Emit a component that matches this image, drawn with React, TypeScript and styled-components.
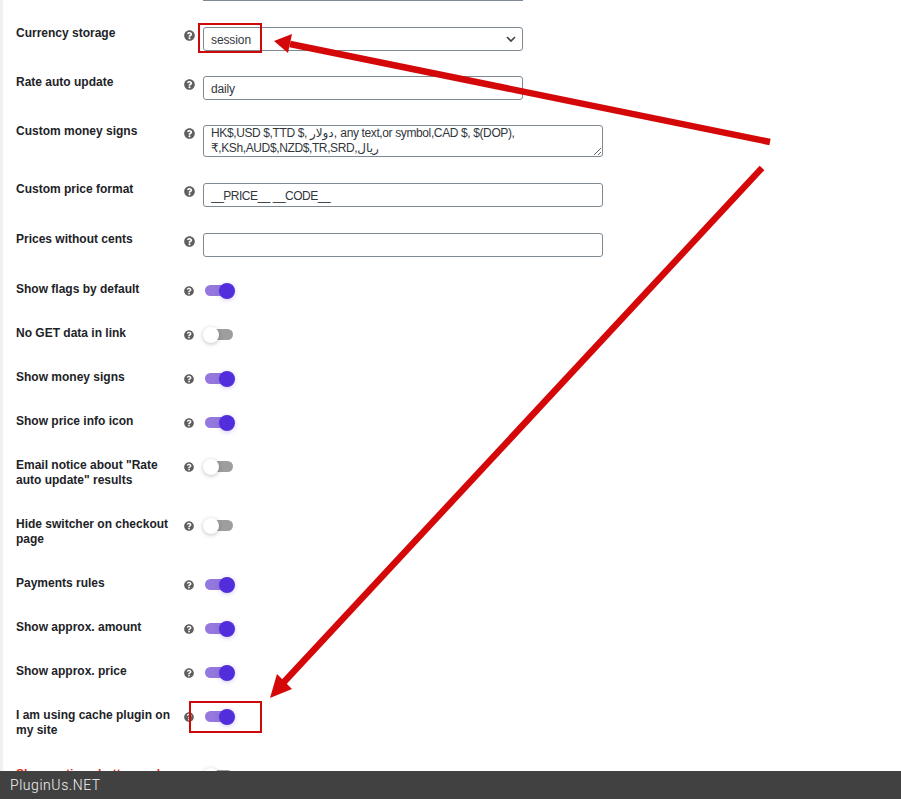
import React from "react";
import styled, { createGlobalStyle } from "styled-components";
import { FaQuestionCircle } from "react-icons/fa";

const Global = createGlobalStyle`
  html, body { margin: 0; padding: 0; height: 100%; overflow: hidden; background: #fff; }
  body { font-family: "Liberation Sans", Arial, sans-serif; }
  * { box-sizing: border-box; }
`;

const Page = styled.main`
  position: relative;
  height: 771px;
  overflow: hidden;
  border-left: 3px solid #f0f0f1;
  padding-left: 13px;
`;

const CutField = styled.div`
  margin-left: 187px;
  width: 320px;
  height: 1px;
  margin-bottom: 25px;
  background: #7e8993;
`;

const Row = styled.div<{ $h: number }>`
  display: grid;
  grid-template-columns: 168px 19px 1fr;
  height: ${(p) => p.$h}px;
  align-items: start;
`;

const Label = styled.label<{ $danger?: boolean }>`
  font-size: 12px;
  font-weight: 700;
  line-height: 15px;
  color: ${(p) => (p.$danger ? "#e8260e" : "#1d2327")};
`;

const Help = styled.span<{ $field: boolean }>`
  display: flex;
  padding-top: ${(p) => (p.$field ? 4 : 4)}px;
  color: #5f5f5f;
  font-size: ${(p) => (p.$field ? 11 : 10)}px;
`;

const Select = styled.select`
  display: block;
  margin-top: 1px;
  width: 320px;
  height: 24px;
  padding: 1px 24px 0 7px;
  appearance: none;
  border: 1px solid #7e8993;
  border-radius: 3px;
  color: #32373c;
  font: 12px "Liberation Sans", Arial, sans-serif;
  letter-spacing: -0.1px;
  background: #fff url("data:image/svg+xml;utf8,<svg xmlns='http://www.w3.org/2000/svg' width='12' height='12' viewBox='0 0 12 12'><path d='M2 4l4 4 4-4' fill='none' stroke='%23444' stroke-width='1.6'/></svg>") no-repeat right 5px center;
`;

const TextInput = styled.input<{ $w: number; $tight?: boolean }>`
  display: block;
  margin-top: 1px;
  width: ${(p) => p.$w}px;
  height: 24px;
  padding: 1px 7px 0;
  border: 1px solid #7e8993;
  border-radius: 3px;
  color: #32373c;
  font: 12px "Liberation Sans", Arial, sans-serif;
  letter-spacing: ${(p) => (p.$tight ? "-0.5px" : "-0.15px")};
  background: #fff;
`;

const TextArea = styled.textarea`
  display: block;
  margin-top: 1px;
  width: 400px;
  height: 32px;
  padding: 0 7px;
  border: 1px solid #7e8993;
  border-radius: 3px;
  color: #32373c;
  font: 12px/15px "Liberation Sans", "DejaVu Sans", Arial, sans-serif;
  letter-spacing: -0.38px;
  background: #fff;
  overflow: hidden;
  resize: both;
`;

const Toggle = styled.span<{ $on?: boolean }>`
  position: relative;
  display: block;
  margin: 3px 0 0 2px;
  width: 28px;
  height: 11px;
  border-radius: 6px;
  background: ${(p) => (p.$on ? "#9478dd" : "#9e9e9e")};
  &::after {
    content: "";
    position: absolute;
    top: -2.5px;
    left: ${(p) => (p.$on ? "14px" : "-2px")};
    width: 16px;
    height: 16px;
    border-radius: 50%;
    background: ${(p) => (p.$on ? "#512ddb" : "#fff")};
    box-shadow: ${(p) =>
      p.$on ? "0 1px 5px rgba(81,45,219,.25)" : "0 1px 4px rgba(0,0,0,.25)"};
  }
`;

const Overlay = styled.svg`
  position: absolute;
  left: -3px;
  top: 0;
  pointer-events: none;
`;

const Footer = styled.footer`
  height: 28px;
  padding-left: 10px;
  background: #414141;
  color: #f4f4f4;
  font: 300 14px/28px Roboto, "Liberation Sans", sans-serif;
  letter-spacing: 0.55px;
`;

type F = {
  label: string;
  h: number;
  kind: "select" | "short" | "area" | "text" | "on" | "off";
  value?: string;
  danger?: boolean;
};

const money =
  "HK$,USD $,TTD $, دولار, any text,or symbol,CAD $, $(DOP), ₹,KSh,AUD$,NZD$,TR,SRD,ريال";

const fields: F[] = [
  { label: "Currency storage", h: 49, kind: "select", value: "session" },
  { label: "Rate auto update", h: 49, kind: "short", value: "daily" },
  { label: "Custom money signs", h: 58, kind: "area", value: money },
  { label: "Custom price format", h: 50, kind: "text", value: "__PRICE__ __CODE__" },
  { label: "Prices without cents", h: 50, kind: "text", value: "" },
  { label: "Show flags by default", h: 44, kind: "on" },
  { label: "No GET data in link", h: 44, kind: "off" },
  { label: "Show money signs", h: 44, kind: "on" },
  { label: "Show price info icon", h: 44, kind: "on" },
  { label: 'Email notice about "Rate auto update" results', h: 59, kind: "off" },
  { label: "Hide switcher on checkout page", h: 59, kind: "off" },
  { label: "Payments rules", h: 44, kind: "on" },
  { label: "Show approx. amount", h: 44, kind: "on" },
  { label: "Show approx. price", h: 44, kind: "on" },
  { label: "I am using cache plugin on my site", h: 59, kind: "on" },
  { label: "Show options button and", h: 44, kind: "off", danger: true },
];

function Control({ f }: { f: F }) {
  switch (f.kind) {
    case "select":
      return (
        <Select defaultValue={f.value}>
          <option>{f.value}</option>
        </Select>
      );
    case "short":
      return <TextInput $w={320} readOnly value={f.value} />;
    case "area":
      return <TextArea readOnly value={f.value} />;
    case "text":
      return <TextInput $w={400} $tight readOnly value={f.value} />;
    case "on":
      return <Toggle $on />;
    default:
      return <Toggle />;
  }
}

export default function App() {
  return (
    <>
      <Global />
      <Page>
        <CutField />
        {fields.map((f) => (
          <Row key={f.label} $h={f.h}>
            <Label $danger={f.danger}>{f.label}</Label>
            <Help $field={f.kind !== "on" && f.kind !== "off"}>
              <FaQuestionCircle />
            </Help>
            <Control f={f} />
          </Row>
        ))}
        <Overlay width="901" height="771" viewBox="0 0 901 771">
          <g fill="none" stroke="#cc0a0a" strokeWidth="2">
            <rect x="199" y="24" width="62" height="28" />
            <rect x="190" y="702" width="71" height="30" />
          </g>
          <g stroke="#d40808" strokeWidth="6.5" fill="none">
            <line x1="770" y1="142" x2="290" y2="44" />
            <line x1="762" y1="168" x2="284" y2="682" />
          </g>
          <g fill="#d40808">
            <polygon points="274,41 292,34 288,53" />
            <polygon points="270,698 277,674 292,689" />
          </g>
        </Overlay>
      </Page>
      <Footer>PluginUs.NET</Footer>
    </>
  );
}
